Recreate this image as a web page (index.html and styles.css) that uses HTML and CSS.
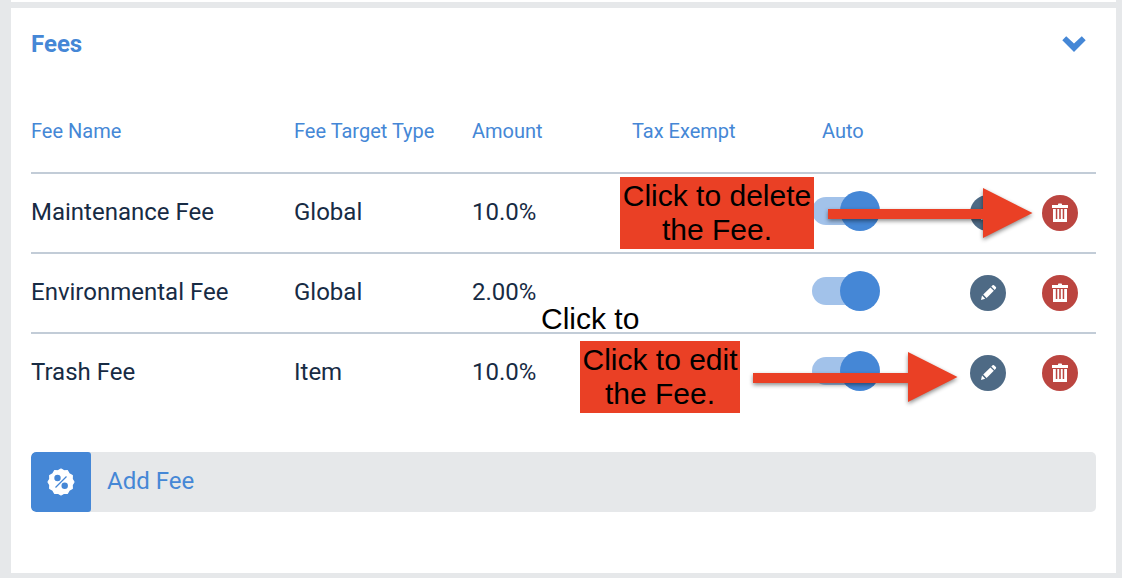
FILE: index.html
```html
<!DOCTYPE html>
<html lang="en">
<head>
    <meta charset="UTF-8">
    <meta name="viewport" content="width=device-width, initial-scale=1.0">
    <title>Fees</title>
    <link rel="stylesheet" href="styles.css">
</head>
<body>
    <!-- shared icons -->
    <svg class="icon-defs" width="0" height="0">
        <symbol id="icon-pencil" viewBox="0 0 36 36">
            <path fill="#fff" d="M11 25 L12 20.600 L15.200 23.800 Z M13.200 19.600 L20.400 12.400 L23.800 15.800 L16.600 23 Z M21.300 11.500 L22.600 10.200 Q23.300 9.600 24 10.200 L25.900 12.100 Q26.500 12.800 25.900 13.500 L24.700 14.900 Z"/>
        </symbol>
        <symbol id="icon-trash" viewBox="0 0 36 36">
            <path fill="#fff" d="M10 10 H16 V9.4 Q16 8.6 16.8 8.6 H19.2 Q20 8.6 20 9.4 V10 H26 V13 H10 Z M11 14 H13.800 V24 H15.300 V14 H17.200 V24 H18.800 V14 H20.700 V24 H22.200 V14 H25 V27 H11 Z"/>
        </symbol>
        <symbol id="icon-arrow" viewBox="0 0 205 50">
            <path fill="#ea4025" d="M0 21 H155 V0 L204.500 25 L155 50 V31 H0 Z"/>
        </symbol>
    </svg>

    <div class="panel panel-previous"></div>

    <div class="panel">
        <div class="panel-header">
            <h2>Fees</h2>
            <svg class="chevron" width="24" height="16" viewBox="0 0 24 16">
                <path fill="#4587d6" d="M0.300 4.200 L4.200 0.200 L12 7.500 L19.800 0.200 L23.700 4.200 L12 16 Z"/>
            </svg>
        </div>

        <div class="fee-row fee-head">
            <span>Fee Name</span>
            <span>Fee Target Type</span>
            <span>Amount</span>
            <span>Tax Exempt</span>
            <span class="head-auto">Auto</span>
        </div>

        <div class="fee-row">
            <span>Maintenance Fee</span>
            <span>Global</span>
            <span>10.0%</span>
            <span></span>
            <div class="toggle"><div class="toggle-thumb"></div></div>
            <button class="round-btn edit"><svg width="36" height="36"><use href="#icon-pencil"/></svg></button>
            <button class="round-btn delete"><svg width="36" height="36"><use href="#icon-trash"/></svg></button>
        </div>
        <div class="fee-row">
            <span>Environmental Fee</span>
            <span>Global</span>
            <span>2.00%</span>
            <span></span>
            <div class="toggle"><div class="toggle-thumb"></div></div>
            <button class="round-btn edit"><svg width="36" height="36"><use href="#icon-pencil"/></svg></button>
            <button class="round-btn delete"><svg width="36" height="36"><use href="#icon-trash"/></svg></button>
        </div>
        <div class="fee-row last">
            <span>Trash Fee</span>
            <span>Item</span>
            <span>10.0%</span>
            <span></span>
            <div class="toggle"><div class="toggle-thumb"></div></div>
            <button class="round-btn edit"><svg width="36" height="36"><use href="#icon-pencil"/></svg></button>
            <button class="round-btn delete"><svg width="36" height="36"><use href="#icon-trash"/></svg></button>
        </div>

        <div class="add-fee">
            <div class="add-icon">
                <svg width="28" height="28" viewBox="-14 -14 28 28">
                    <polygon fill="#fff" stroke="#fff" stroke-width="1.2" stroke-linejoin="round" points="0,-13 3,-11.2 6.5,-11.3 8.2,-8.2 11.3,-6.5 11.2,-3 13,0 11.2,3 11.3,6.5 8.2,8.2 6.5,11.3 3,11.2 0,13 -3,11.2 -6.5,11.3 -8.2,8.2 -11.3,6.5 -11.2,3 -13,0 -11.2,-3 -11.3,-6.5 -8.2,-8.2 -6.5,-11.3 -3,-11.2"/>
                    <circle cx="-3.5" cy="-4" r="3.2" fill="#4587d6"/>
                    <circle cx="3.7" cy="3.8" r="3.2" fill="#4587d6"/>
                    <path stroke="#4587d6" stroke-width="1.3" d="M-5.5 5.5 L5.500 -5.500"/>
                </svg>
            </div>
            <span>Add Fee</span>
        </div>
    </div>

    <!-- callouts over the table -->
    <div class="callout callout-delete">Click to delete<br>the Fee.</div>
    <svg class="arrow arrow-delete" width="205" height="50"><use href="#icon-arrow"/></svg>
    <div class="callout-text">Click to</div>
    <div class="callout callout-edit">Click to edit<br>the Fee.</div>
    <svg class="arrow arrow-edit" width="205" height="50"><use href="#icon-arrow"/></svg>
</body>
</html>
```
FILE: styles.css
```css
* {
    box-sizing: border-box;
}
body {
    position: relative;
    height: 578px;
    margin: 0;
    padding: 0 6px 0 11px;
    overflow: hidden;
    background: #e6e8ea;
    color: #172b44;
    font-family: Roboto, sans-serif;
    font-size: 24px;
}
.icon-defs {
    position: absolute;
}
.panel {
    height: 565px;
    padding: 0 20px;
    background: #fff;
}
.panel-previous {
    height: 2px;
    margin-bottom: 6px;
}
.panel-header {
    display: flex;
    align-items: center;
    justify-content: space-between;
    height: 72px;
    padding-right: 10px;
}
h2 {
    margin: 0;
    color: #4587d6;
    font-size: 24px;
    font-weight: 700;
}
.fee-row {
    display: grid;
    grid-template-columns: 263px 178px 160px 180px 158px 72px 54px;
    align-items: center;
    height: 80px;
    padding-bottom: 2px;
    border-bottom: 2px solid #c2ccd7;
}
.fee-row.last {
    border-bottom-color: transparent;
}
.fee-head {
    height: 94px;
    padding-top: 10px;
    padding-bottom: 0;
    color: #4587d6;
    font-size: 20px;
}
.head-auto {
    padding-left: 10px;
}

/* toggle */
.toggle {
    display: flex;
    align-items: center;
    justify-content: flex-end;
    width: 68px;
    height: 28px;
    margin-top: -2px;
    border-radius: 14px 0 0 14px;
    background: linear-gradient(to right, #a2c2ea 50px, transparent 50px);
}
.toggle-thumb {
    flex: none;
    width: 40px;
    height: 40px;
    border-radius: 50%;
    background: #4587d6;
}

.round-btn {
    width: 36px;
    height: 36px;
    margin-top: 2px;
    padding: 0;
    border: 0;
    border-radius: 50%;
}
.round-btn svg {
    display: block;
}
.edit {
    background: #4e6a85;
}
.delete {
    background: #bb4540;
}

.add-fee {
    display: flex;
    align-items: center;
    gap: 16px;
    height: 60px;
    margin-top: 38px;
    overflow: hidden;
    border-radius: 5px;
    background: #e6e8ea;
    color: #4587d6;
}
.add-fee span {
    padding-bottom: 2px;
}
.add-icon {
    display: flex;
    align-items: center;
    justify-content: center;
    width: 60px;
    height: 60px;
    border-radius: 5px 3px 3px 5px;
    background: #4587d6;
}

/* callouts */
.callout,
.callout-text {
    position: absolute;
    color: #000;
    font-family: "Liberation Sans", Arial, sans-serif;
    font-size: 30px;
    line-height: 34px;
    text-align: center;
    white-space: nowrap;
}
.callout {
    height: 72px;
    padding-top: 2px;
    background: #ea4025;
}
.callout-delete {
    top: 177px;
    left: 620px;
    width: 194px;
}
.callout-edit {
    top: 341px;
    left: 580px;
    width: 160px;
}
.callout-text {
    top: 302px;
    left: 541px;
}
.arrow {
    position: absolute;
    overflow: visible;
    filter: drop-shadow(0 2px 2px rgba(0, 0, 0, 0.45));
}
.arrow-delete {
    top: 188px;
    left: 828px;
}
.arrow-edit {
    top: 352px;
    left: 753px;
}
```
